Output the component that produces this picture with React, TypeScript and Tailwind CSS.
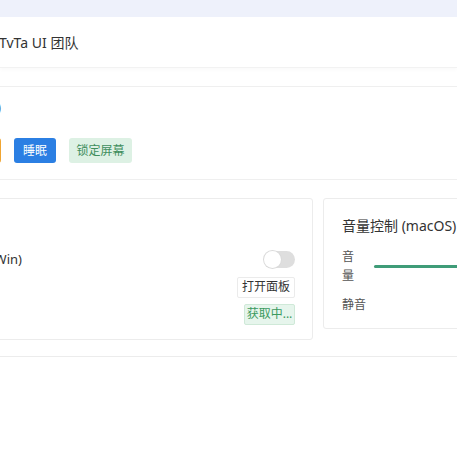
import { useState } from "react";

function Toggle({ on, onChange }: { on: boolean; onChange: (v: boolean) => void }) {
  return (
    <button
      onClick={() => onChange(!on)}
      className={`relative h-[17px] w-[31px] rounded-full transition ${
        on ? "bg-[#3f9c78]" : "bg-[#dedede]"
      }`}
    >
      <span
        className={`absolute top-0 h-[17px] w-[17px] rounded-full bg-white shadow-[0_0_0_1px_#dadada] transition-all ${
          on ? "left-[14px]" : "left-0"
        }`}
      />
    </button>
  );
}

export default function App() {
  const [muted, setMuted] = useState(false);
  const [volume] = useState(100);

  return (
    <div className="min-h-screen w-full overflow-hidden bg-white font-['Noto_Sans','Noto_Sans_CJK_SC',sans-serif] text-[#333]">
      {/* top strip */}
      <div className="h-[17px] bg-[#eef1fb]" />

      {/* team header */}
      <header className="flex h-[51px] items-center border-b border-[#f2f2f2] shadow-[0_2px_4px_rgba(0,0,0,0.025)]">
        <span className="-ml-[1px] whitespace-nowrap text-[14px]">TvTa UI 团队</span>
      </header>

      <div className="h-[18px]" />

      {/* power actions */}
      <section className="border-y border-[#efefef] pb-[16px] pt-[9px]">
        <h3 className="-ml-[121px] w-[122px] whitespace-nowrap text-right text-[14px] leading-[22px]">
          电源操作 (Win)
        </h3>
        <div className="-ml-[55px] mt-[20px] flex gap-[13px]">
          <button className="h-[25px] w-[56px] rounded-[3px] bg-[#f0a532] text-[12px] text-white">
            重启
          </button>
          <button className="h-[25px] w-[42px] rounded-[3px] bg-[#2b7fe3] text-[12px] text-white">
            睡眠
          </button>
          <button className="h-[25px] w-[63px] rounded-[3px] bg-[#ddf1e4] text-[12px] text-[#3f8e5d]">
            锁定屏幕
          </button>
        </div>
      </section>

      {/* volume cards */}
      <section className="border-b border-[#ececec] pb-[16px] pt-[18px]">
        <div className="-ml-[100px] flex items-start gap-[10px]">
          <div className="w-[413px] shrink-0 rounded-[3px] border border-[#ececec] bg-white pb-[14px] pl-[17px] pr-[17px] pt-[17px]">
            <div className="h-[20px]" />
            <div className="mt-[14px] flex items-center justify-between">
              <span className="w-[104px] whitespace-nowrap text-right text-[13px]">静音 (Win)</span>
              <Toggle on={muted} onChange={setMuted} />
            </div>
            <div className="mt-[7px] flex flex-col items-end gap-[6px]">
              <button className="h-[21px] w-[58px] rounded-[2px] border border-[#ebebeb] bg-white text-[12px] text-[#333]">
                打开面板
              </button>
              <button className="h-[21px] w-[51px] rounded-[2px] border border-[#cfe9d8] bg-[#e6f5ec] text-[12px] text-[#3b9a5f]">
                获取中...
              </button>
            </div>
          </div>

          <div className="w-[300px] shrink-0 rounded-[3px] border border-[#ececec] bg-white pb-[14px] pl-[18px] pr-[18px] pt-[17px]">
            <div className="whitespace-nowrap text-[14px] leading-[20px]">音量控制 (macOS)</div>
            <div className="mt-[11px] flex items-center">
              <span className="w-[13px] text-[12px] leading-[19px] text-[#555]">音量</span>
              <div className="ml-[19px] h-[3px] flex-1 rounded-full bg-[#e5e5e5]">
                <div className="h-[3px] rounded-full bg-[#3f9c78]" style={{ width: `${volume}%` }} />
              </div>
            </div>
            <div className="mt-[10px] text-[12px] leading-[19px] text-[#555]">静音</div>
          </div>
        </div>
      </section>
    </div>
  );
}
